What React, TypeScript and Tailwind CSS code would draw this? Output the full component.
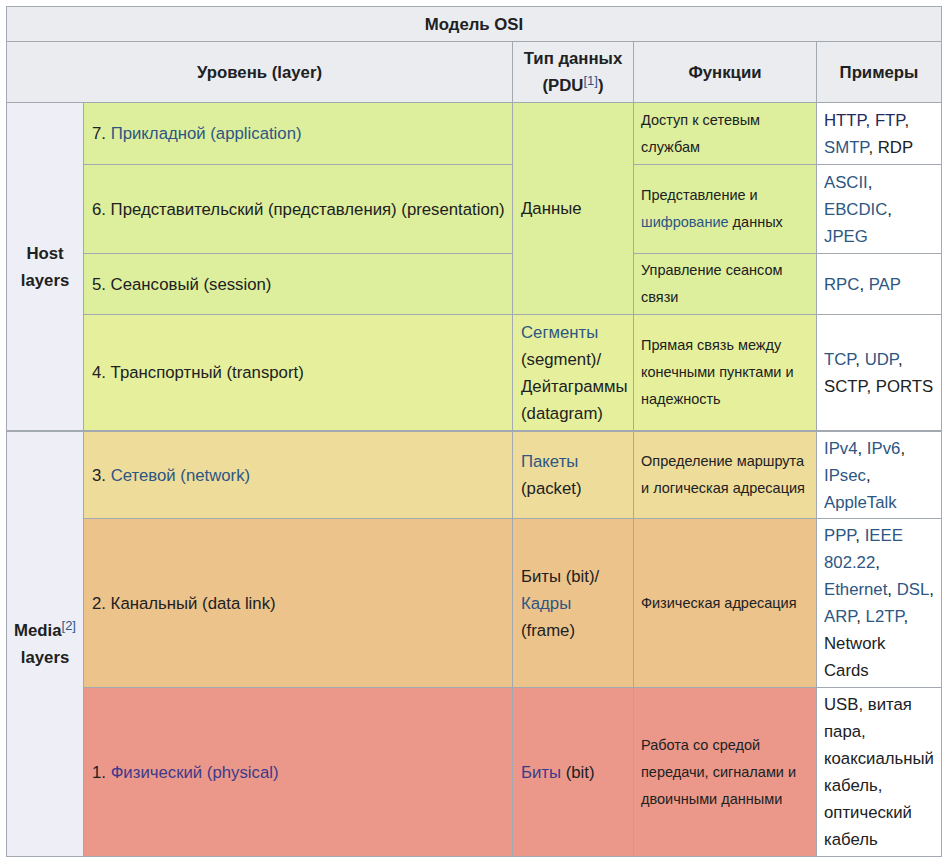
import type { ReactNode } from "react"

const FONT = "font-['Liberation_Sans',Arial,sans-serif]"

const L = ({ children }: { children: ReactNode }) => (
  <a className="text-[#2d5683]">{children}</a>
)

const V = ({ children }: { children: ReactNode }) => (
  <a className="text-[#3d3a8a]">{children}</a>
)

const D = ({ children }: { children: ReactNode }) => (
  <a className="text-[#1f2b5c]">{children}</a>
)

const Sup = ({ n }: { n: number }) => (
  <sup className="text-[13px] font-normal text-[#2d5683]">[{n}]</sup>
)

type CellProps = {
  className?: string
  children?: ReactNode
}

const Head = ({ className = "", children }: CellProps) => (
  <div
    className={`flex items-center justify-center bg-[#eaecf0] text-center text-[16.75px] font-bold leading-[27px] text-[#202122] ${className}`}
  >
    <div>{children}</div>
  </div>
)

const Cell = ({ className = "", children }: CellProps) => (
  <div
    className={`flex items-center px-[8px] text-[16.75px] leading-[27px] text-[#202122] whitespace-nowrap ${className}`}
  >
    <div>{children}</div>
  </div>
)

const Fn = ({ className = "", children }: CellProps) => (
  <div
    className={`flex items-center px-[7px] text-[14.5px] leading-[27px] text-[#202122] whitespace-nowrap ${className}`}
  >
    <div>{children}</div>
  </div>
)

const Ex = ({ className = "", children }: CellProps) => (
  <div
    className={`flex items-center bg-white px-[7px] text-[16.75px] leading-[27px] text-[#202122] whitespace-nowrap ${className}`}
  >
    <div>{children}</div>
  </div>
)

const G7 = "bg-[#ddef9c]"
const G4 = "bg-[#e6f09c]"
const G3 = "bg-[#eedc9a] border-t border-[#a2a9b1]"
const G2 = "bg-[#ecc38b]"
const G1 = "bg-[#eb988a]"

export default function App() {
  return (
    <div className={`min-h-screen bg-white pl-[6px] pt-[6px] ${FONT}`}>
      <div className="grid w-[936px] grid-cols-[76px_428px_120px_182px_124px] grid-rows-[34px_60px_61px_88px_60px_115px_87px_168px_168px] gap-px border border-[#a2a9b1] bg-[#a2a9b1]">
        <Head className="col-span-5">Модель OSI</Head>

        <Head className="col-span-2">Уровень (layer)</Head>
        <Head>
          Тип данных
          <br />
          (PDU<Sup n={1} />)
        </Head>
        <Head>Функции</Head>
        <Head>Примеры</Head>

        {/* host layers */}
        <Head className="row-span-4 bg-[#eeeff6]">
          Host
          <br />
          layers
        </Head>

        <Cell className={G7}>
          7.&nbsp;<L>Прикладной (application)</L>
        </Cell>
        <Cell className={`row-span-3 ${G7}`}>Данные</Cell>
        <Fn className={G7}>
          Доступ к сетевым
          <br />
          службам
        </Fn>
        <Ex>
          <D>HTTP</D>, <D>FTP</D>,
          <br />
          <L>SMTP</L>, RDP
        </Ex>

        <Cell className={G7}>6. Представительский (представления) (presentation)</Cell>
        <Fn className={G7}>
          Представление и
          <br />
          <L>шифрование</L> данных
        </Fn>
        <Ex>
          <L>ASCII</L>,
          <br />
          <L>EBCDIC</L>,
          <br />
          <L>JPEG</L>
        </Ex>

        <Cell className={G7}>5. Сеансовый (session)</Cell>
        <Fn className={G7}>
          Управление сеансом
          <br />
          связи
        </Fn>
        <Ex>
          <L>RPC</L>, <L>PAP</L>
        </Ex>

        <Cell className={G4}>4. Транспортный (transport)</Cell>
        <Cell className={G4}>
          <div>
            <L>Сегменты</L>
            <br />
            (segment)/
            <br />
            Дейтаграммы
            <br />
            (datagram)
          </div>
        </Cell>
        <Fn className={G4}>
          Прямая связь между
          <br />
          конечными пунктами и
          <br />
          надежность
        </Fn>
        <Ex>
          <L>TCP</L>, <L>UDP</L>,
          <br />
          SCTP, PORTS
        </Ex>

        {/* media layers */}
        <Head className="row-span-3 border-t border-[#a2a9b1] bg-[#eeeff6]">
          Media<Sup n={2} />
          <br />
          layers
        </Head>

        <Cell className={G3}>
          3.&nbsp;<L>Сетевой (network)</L>
        </Cell>
        <Cell className={G3}>
          <div>
            <L>Пакеты</L>
            <br />
            (packet)
          </div>
        </Cell>
        <Fn className={G3}>
          Определение маршрута
          <br />
          и логическая адресация
        </Fn>
        <Ex className="border-t border-[#a2a9b1]">
          <L>IPv4</L>, <L>IPv6</L>,
          <br />
          <L>IPsec</L>,
          <br />
          <L>AppleTalk</L>
        </Ex>

        <Cell className={G2}>2. Канальный (data link)</Cell>
        <Cell className={G2}>
          <div>
            Биты (bit)/
            <br />
            <L>Кадры</L>
            <br />
            (frame)
          </div>
        </Cell>
        <Fn className={G2}>Физическая адресация</Fn>
        <Ex>
          <L>PPP</L>, <L>IEEE</L>
          <br />
          <L>802.22</L>,
          <br />
          <L>Ethernet</L>, <L>DSL</L>,
          <br />
          <L>ARP</L>, <L>L2TP</L>,
          <br />
          Network
          <br />
          Cards
        </Ex>

        <Cell className={G1}>
          1.&nbsp;<V>Физический (physical)</V>
        </Cell>
        <Cell className={G1}>
          <V>Биты</V>&nbsp;(bit)
        </Cell>
        <Fn className={G1}>
          Работа со средой
          <br />
          передачи, сигналами и
          <br />
          двоичными данными
        </Fn>
        <Ex>
          USB, витая
          <br />
          пара,
          <br />
          коаксиальный
          <br />
          кабель,
          <br />
          оптический
          <br />
          кабель
        </Ex>
      </div>
    </div>
  )
}
